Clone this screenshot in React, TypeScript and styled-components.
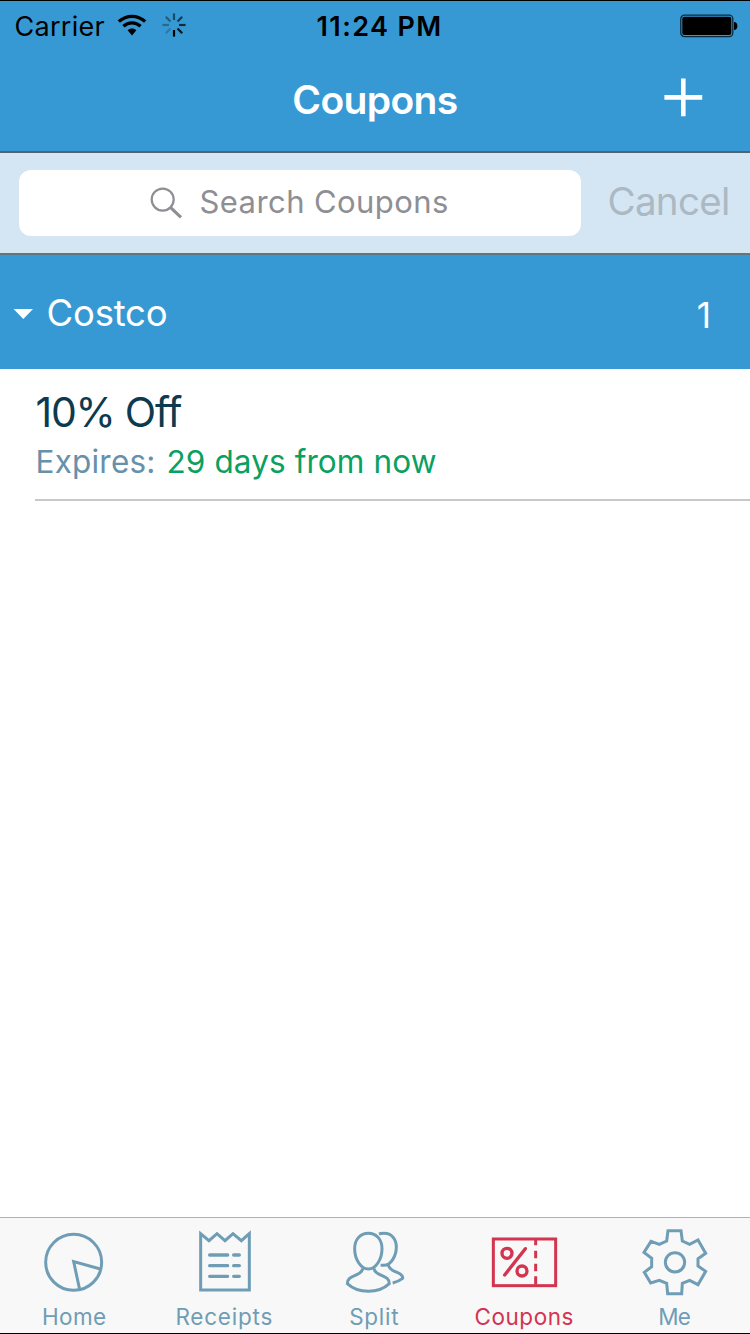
import React from "react";
import styled, { createGlobalStyle } from "styled-components";

const blue = "#3799d3";
const slate = "#6f9db5";
const red = "#d3344f";

const GlobalStyle = createGlobalStyle`
  * { box-sizing: border-box; }
  body { margin: 0; background: #fff; font-family: Inter, "Liberation Sans", sans-serif; }
  svg { display: block; }
`;

const Screen = styled.div`
  display: flex;
  flex-direction: column;
  width: 750px;
  height: 1334px;
  overflow: hidden;
  border-top: 1px solid #000;
  border-bottom: 1px solid #000;
  background: #fff;
`;

const StatusBar = styled.div`
  display: grid;
  grid-template-columns: 302px 1fr auto;
  align-items: center;
  height: 49px;
  padding: 0 12.5px 0 14.5px;
  background: ${blue};
  color: #000;
  font-size: 27px;
  line-height: 32px;
`;

const CarrierGroup = styled.div`
  display: flex;
  align-items: center;
  letter-spacing: 0.28px;
`;

const CarrierName = styled.span`
  padding-top: 2px;
`;

const WifiIcon = styled.svg`
  margin-left: 12px;
`;

const SpinnerIcon = styled.svg`
  margin: 0 0 1px 15px;
`;

const Clock = styled.div`
  padding-top: 2px;
  font-weight: 600;
  letter-spacing: 1.4px;
`;

const NavBar = styled.header`
  display: grid;
  grid-template-columns: 1fr auto 1fr;
  align-items: center;
  height: 101px;
  padding: 0 47px 1px;
  background: ${blue};
  color: #fff;
`;

const NavTitle = styled.h1`
  grid-column: 2;
  margin: 0;
  font-size: 39px;
  font-weight: 600;
  letter-spacing: -0.63px;
  line-height: 48px;
`;

const AddButton = styled.button`
  justify-self: end;
  margin-bottom: 6px;
  padding: 0;
  border: 0;
  background: none;
`;

const SearchBar = styled.div`
  display: flex;
  align-items: center;
  height: 104px;
  padding-left: 19px;
  border-top: 2px solid #4f6370;
  border-bottom: 2px solid #66747d;
  background: #d4e6f4;
`;

const SearchField = styled.div`
  display: flex;
  align-items: center;
  width: 562px;
  height: 66px;
  padding: 0 0 1px 131px;
  border-radius: 12px;
  background: #fff;
  color: #8e8e93;
  font-size: 31px;
  letter-spacing: 0.42px;
  white-space: nowrap;
`;

const SearchText = styled.span`
  padding-bottom: 2px;
`;

const SearchIcon = styled.svg`
  margin-right: 17.5px;
`;

const CancelButton = styled.button`
  margin-left: 26.5px;
  padding: 0 0 4px;
  border: 0;
  background: none;
  color: #acb9c2;
  font: 400 38.5px/46px Inter, sans-serif;
  letter-spacing: -0.69px;
`;

const SectionHeader = styled.div`
  display: flex;
  align-items: center;
  height: 114px;
  padding: 3px 39px 0 13px;
  background: ${blue};
  color: #fff;
`;

const SectionName = styled.div`
  flex: 1;
  margin-left: 12.5px;
  padding-bottom: 2px;
  font-size: 36.5px;
  letter-spacing: -0.2px;
  line-height: 44px;
`;

const SectionCount = styled.div`
  padding-top: 2px;
  font-size: 35px;
  line-height: 44px;
`;

const CouponRow = styled.div`
  height: 132px;
  margin-left: 35px;
  padding: 20px 0 0 0.5px;
  border-bottom: 2px solid #c8c7cc;
`;

const CouponTitle = styled.div`
  color: #0d3a4e;
  font-size: 41px;
  letter-spacing: -1.25px;
  line-height: 46px;
`;

const CouponMeta = styled.div`
  display: flex;
  gap: 11px;
  margin-top: 2px;
  color: #6790aa;
  font-size: 31.5px;
  letter-spacing: 0.2px;
  line-height: 50px;
`;

const Expiry = styled.span`
  color: #0aa05f;
  letter-spacing: 0.1px;
`;

const TabBar = styled.nav`
  display: flex;
  height: 116px;
  margin-top: auto;
  border-top: 1px solid #b2b2b2;
  background: #f8f8f8;
`;

const Tab = styled.div<{ $active?: boolean }>`
  display: flex;
  flex-direction: column;
  align-items: center;
  width: 150px;
  color: ${(p) => (p.$active ? red : slate)};
`;

const TabLabel = styled.span<{ $spacing: number }>`
  padding: 1px 1.5px 0 0;
  font-size: 22.5px;
  letter-spacing: ${(p) => p.$spacing}px;
  line-height: 22px;
`;

const TabIcon = ({ children }: { children: React.ReactNode }) => (
  <svg width="150" height="87" viewBox="0 24 450 261" fill="none" stroke="currentColor" strokeWidth="9">
    {children}
  </svg>
);

const tabs = [
  {
    label: "Home",
    spacing: 0.36,
    icon: (
      <>
        <circle cx="221" cy="157" r="84" />
        <path d="M301 177 L221 155 L239 239" />
      </>
    ),
  },
  {
    label: "Receipts",
    spacing: 0.77,
    icon: (
      <>
        <path d="M152 71 V240 H298 V71 L274 92 L249 71 L225 92 L201 71 L177 92 Z" />
        <path
          strokeWidth="10"
          strokeLinecap="round"
          d="M179 135 H233 M251 135 H268 M179 167 H233 M251 167 H268 M179 199 H233 M251 199 H268"
        />
      </>
    ),
  },
  {
    label: "Split",
    spacing: 0.72,
    icon: (
      <>
        <path d="M205 70 C180 70 164 89 164 116 C164 147 182 177 205 177 C228 177 246 147 246 116 C246 89 230 70 205 70 Z" />
        <path d="M188 175 C187 187 178 191 168 195 C152 202 142 206 142 221 C158 236 180 244 205 244 C230 244 252 236 268 221 C268 206 258 202 242 195 C232 191 223 187 222 175" />
        <path d="M237 72 C242 70 246 70 252 70 C275 70 289 87 289 111 C289 140 271 166 252 166 H242 M265 164 C267 175 275 180 284 184 C298 190 308 193 308 205 C300 211 290 216 278 219" />
      </>
    ),
  },
  {
    label: "Coupons",
    spacing: 0.53,
    active: true,
    icon: (
      <>
        <rect x="130" y="87" width="187" height="140" />
        <path d="M257 90 V106 M257 122 V145 M257 161 V184 M257 199 V224" />
        <circle cx="171" cy="130" r="15" strokeWidth="10" />
        <circle cx="216" cy="183" r="15" strokeWidth="10" />
        <path strokeWidth="10" strokeLinecap="round" d="M164 195 L226 116" />
      </>
    ),
  },
  {
    label: "Me",
    spacing: -0.8,
    icon: (
      <>
        <path d="M204 62 H243 L247 93 L269 103 L294 90 L317 130 L294 146 V168 L317 184 L294 224 L269 211 L247 220 L245 251 H203 L200 220 L178 211 L152 219 L133 187 L155 170 V145 L132 127 L153 94 L178 103 L200 93 Z" />
        <circle cx="225" cy="157" r="29" />
      </>
    ),
  },
];

const rays = [1, 0.2, 0.3, 0.4, 0.5, 0.6, 0.7, 0.85];

export default function App() {
  return (
    <>
      <GlobalStyle />
      <Screen>
        <StatusBar>
          <CarrierGroup>
            <CarrierName>Carrier</CarrierName>
            <WifiIcon width="30" height="23" viewBox="0 0 30 23" fill="none" stroke="#000">
              <path strokeWidth="3.4" d="M1.8 7.6 C9.5 0.6 20.5 0.6 28.2 7.6" />
              <path strokeWidth="3.4" d="M6.4 12.3 C11.5 7.7 18.5 7.7 23.6 12.3" />
              <path fill="#000" stroke="none" d="M10.6 16.3 C13.2 14 16.8 14 19.4 16.3 L15 21.4 Z" />
            </WifiIcon>
            <SpinnerIcon width="24" height="24" viewBox="-12 -12 24 24" stroke="#000" strokeWidth="2.2">
              {rays.map((opacity, i) => (
                <path key={i} d="M0 5 V11.6" opacity={opacity} transform={`rotate(${i * 45})`} />
              ))}
            </SpinnerIcon>
          </CarrierGroup>
          <Clock>11:24 PM</Clock>
          <svg width="58" height="24" viewBox="0 0 58 24">
            <rect x="0.8" y="1.2" width="52" height="21.4" rx="3.6" fill="none" stroke="#0b2a3d" strokeWidth="1.3" />
            <rect x="2.3" y="2.8" width="49" height="18.2" rx="2" />
            <path d="M54 8 C56 8 57.4 9.6 57.4 12 C57.4 14.4 56 16 54 16 Z" />
          </svg>
        </StatusBar>

        <NavBar>
          <NavTitle>Coupons</NavTitle>
          <AddButton aria-label="Add coupon">
            <svg width="39" height="39" viewBox="0 0 39 39" stroke="#fff" strokeWidth="4.6">
              <path d="M19.3 0.6 V38.2 M0.4 19.4 H38.2" />
            </svg>
          </AddButton>
        </NavBar>

        <SearchBar>
          <SearchField>
            <SearchIcon width="32" height="32" viewBox="0 0 32 32" fill="none" stroke="#8e8e93">
              <circle cx="12.7" cy="12.6" r="11" strokeWidth="2.2" />
              <path strokeWidth="3.2" d="M20.4 20.4 L31 30.4" />
            </SearchIcon>
            <SearchText>Search Coupons</SearchText>
          </SearchField>
          <CancelButton>Cancel</CancelButton>
        </SearchBar>

        <SectionHeader>
          <svg width="21" height="12" viewBox="0 0 21 12" fill="#fff">
            <path d="M0.6 1 H20 L10.3 11 Z" />
          </svg>
          <SectionName>Costco</SectionName>
          <SectionCount>1</SectionCount>
        </SectionHeader>

        <CouponRow>
          <CouponTitle>10% Off</CouponTitle>
          <CouponMeta>
            Expires:
            <Expiry>29 days from now</Expiry>
          </CouponMeta>
        </CouponRow>

        <TabBar>
          {tabs.map((tab) => (
            <Tab key={tab.label} $active={tab.active}>
              <TabIcon>{tab.icon}</TabIcon>
              <TabLabel $spacing={tab.spacing}>{tab.label}</TabLabel>
            </Tab>
          ))}
        </TabBar>
      </Screen>
    </>
  );
}
